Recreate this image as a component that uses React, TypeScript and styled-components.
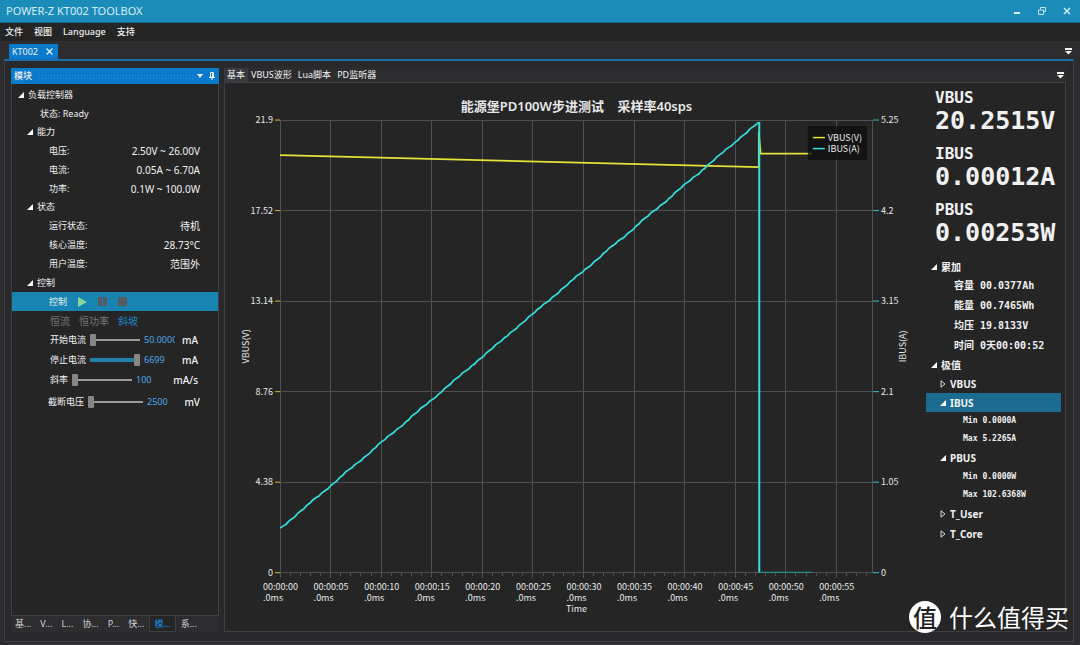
import React from "react";
import styled, { createGlobalStyle } from "styled-components";

const SANS = `"Noto Sans", "Noto Sans CJK SC", sans-serif`;
const MONO = `"DejaVu Sans Mono", "Noto Sans CJK SC", monospace`;

const GlobalStyle = createGlobalStyle`
  * { box-sizing: border-box; }
  body { margin: 0; background: #2d2d30; color: #f1f1f1; font: 10px/16px ${SANS}; }
  button, input { font: inherit; color: inherit; background: none; border: 0; padding: 0; margin: 0; }
`;

const Page = styled.div`
  min-height: 100vh;
  display: flex;
  flex-direction: column;
`;

const TitleBar = styled.header`
  height: 23px;
  padding: 0 8px 0 6px;
  display: flex;
  align-items: center;
  justify-content: space-between;
  background: #1b8cba;
  border-bottom: 1px solid #17698c;
`;

const Title = styled.h1`
  margin: 0;
  font-size: 11px;
  font-weight: 400;
  color: #d8eef7;
`;

const WindowButtons = styled.div`
  display: flex;
  gap: 15px;
`;

const IconButton = styled.button`
  display: flex;
  align-items: center;
  justify-content: center;
  width: 10px;
  height: 10px;
`;

const MenuBar = styled.nav`
  height: 18px;
  padding: 0 5px;
  display: flex;
  align-items: center;
  gap: 11px;
  background: #252526;
  font-size: 9px;
  font-weight: 500;
`;

const DocumentBar = styled.div`
  height: 18px;
  margin: 0 6px 0 4px;
  padding: 3px 1px 0 5px;
  display: flex;
  justify-content: space-between;
  align-items: center;
`;

const DocumentTab = styled.button`
  height: 15px;
  padding: 0 5px 0 3px;
  display: flex;
  align-items: center;
  gap: 8px;
  background: #0a7acc;
  font-size: 9px;
  line-height: 15px;
`;

const Workspace = styled.main`
  flex: 1;
  margin: 0 6px 3px 4px;
  padding: 7px 7px 9px 6px;
  display: flex;
  gap: 5px;
  border: 1px solid #3f3f46;
  border-top: 2px solid #1b6ea8;
  background: #29292b;
`;

const SidePanel = styled.section`
  width: 208px;
  flex: none;
  display: flex;
  flex-direction: column;
`;

const PanelHeader = styled.header`
  height: 16px;
  padding: 0 2px 0 3px;
  display: flex;
  align-items: center;
  gap: 2px;
  background: #0a7acc;
  font-size: 9px;
  font-weight: 500;
`;

const Grip = styled.span`
  flex: 1;
  height: 5px;
  margin-left: 4px;
  background-image: radial-gradient(circle, #2f92da 0 1px, transparent 1px);
  background-size: 3px 3px;
`;

const PanelBody = styled.div`
  flex: 1;
  border: 1px solid #3f3f46;
  border-top: 0;
  padding-top: 1px;
  background: #252526;
  font-size: 9px;
`;

const Row = styled.div<{ $indent: number; $height?: number; $selected?: string }>`
  height: ${(p) => p.$height ?? 19}px;
  padding-left: ${(p) => p.$indent}px;
  padding-right: 18px;
  display: flex;
  align-items: center;
  justify-content: space-between;
  background: ${(p) => p.$selected ?? "transparent"};
`;

const Reading = styled.span`
  font-size: 10px;
`;

const TreeToggle = styled.button`
  display: flex;
  align-items: center;
  gap: 4px;
`;

const Transport = styled.div`
  flex: 1;
  display: flex;
  align-items: center;
  gap: 10px;
`;

const ModeRow = styled.div`
  height: 19px;
  padding-left: 38px;
  display: flex;
  align-items: center;
  gap: 9px;
  font-size: 10px;
`;

const Mode = styled.button<{ $active?: boolean }>`
  color: ${(p) => (p.$active ? "#1f84c4" : "#77777a")};
`;

const SliderRow = styled.div<{ $wide?: boolean }>`
  height: 20px;
  padding: 0 ${(p) => (p.$wide ? 18 : 20)}px 0 ${(p) => (p.$wide ? 36 : 38)}px;
  margin-top: ${(p) => (p.$wide ? 2 : 0)}px;
  display: flex;
  align-items: center;
`;

const SliderLabel = styled.label`
  flex: none;
`;

const Slider = styled.input<{ $track: string; $thick: number; $width: number }>`
  appearance: none;
  flex: none;
  width: ${(p) => p.$width}px;
  height: 14px;
  margin-left: 4px;
  &::-webkit-slider-runnable-track {
    height: ${(p) => p.$thick}px;
    background: ${(p) => p.$track};
  }
  &::-webkit-slider-thumb {
    appearance: none;
    width: 6px;
    height: 12px;
    margin-top: ${(p) => (p.$thick - 12) / 2}px;
    border-radius: 1px;
    background: #868686;
  }
`;

const SliderValue = styled.input`
  width: 31px;
  margin-left: 4px;
  height: 16px;
  color: #4ea8e6;
`;

const Unit = styled.span`
  margin-left: auto;
  font-size: 10px;
  font-weight: 500;
`;

const BottomTabs = styled.div`
  height: 16px;
  display: flex;
  gap: 1px;
  background: #2d2d30;
`;

const BottomTab = styled.button<{ $active?: boolean }>`
  height: 16px;
  padding: 0 4px;
  color: ${(p) => (p.$active ? "#1f93e8" : "#d0d0d0")};
  background: ${(p) => (p.$active ? "#252526" : "transparent")};
  border: ${(p) => (p.$active ? "1px solid #3f3f46" : "0")};
  border-top: 0;
  font-size: 9px;
`;

const DataPanel = styled.section`
  flex: 1;
  min-width: 0;
  display: flex;
  flex-direction: column;
`;

const ViewTabs = styled.div`
  height: 14px;
  padding-right: 1px;
  display: flex;
  align-items: center;
  background: #2d2d30;
`;

const ViewTab = styled.button<{ $active?: boolean }>`
  height: 14px;
  padding: 0 3px;
  font-size: 9px;
  line-height: 14px;
  background: ${(p) => (p.$active ? "#3a3a3e" : "transparent")};
`;

const TabMenu = styled(IconButton)`
  margin-left: auto;
`;

const DataBody = styled.div`
  flex: 1;
  padding-right: 4px;
  display: flex;
  align-items: flex-start;
  border: 1px solid #3f3f46;
  background: #252526;
`;

const Chart = styled.svg`
  flex: 1;
  min-width: 0;
  display: block;
  font-family: "Noto Sans CJK SC", sans-serif;
  font-size: 9px;
  fill: #e8e8e8;
`;

const ChartTitle = styled.text`
  font: 600 13px ${SANS};
  white-space: pre;
`;

const Readout = styled.aside`
  width: 135px;
  flex: none;
  padding-top: 6px;
  font-weight: 700;
`;

const Metric = styled.div`
  padding-left: 9px;
  margin-bottom: 10px;
  font-family: ${MONO};
`;

const MetricName = styled.div`
  font-size: 16px;
  line-height: 18px;
`;

const MetricValue = styled.div`
  font-size: 25px;
  line-height: 28px;
`;

const Total = styled.div`
  height: 20px;
  padding-left: 28px;
  display: flex;
  align-items: center;
  gap: 6px;
  font-family: ${MONO};
`;

const Extreme = styled(Row)`
  justify-content: flex-start;
  gap: 5px;
  font-family: ${MONO};
  font-size: 8px;
`;

const Watermark = styled.div`
  position: absolute;
  right: 11px;
  top: 601px;
  display: flex;
  align-items: center;
  gap: 8px;
  font-family: "Noto Sans CJK SC", sans-serif;
  font-size: 24px;
  line-height: 32px;
  color: #fff;
`;

const Seal = styled.span`
  width: 32px;
  height: 32px;
  border-radius: 50%;
  background: #fff;
  color: #222;
  text-align: center;
  font-weight: 500;
`;

const Arrow = ({ open = true }: { open?: boolean }) => (
  <svg width="6" height="8" viewBox="0 0 6 8" aria-hidden="true">
    {open ? <path d="M6 1V7H0Z" fill="#fff" /> : <path d="M1 0.8V7.2L5 4Z" fill="none" stroke="#ddd" />}
  </svg>
);

const TabListIcon = () => (
  <svg width="7" height="7" viewBox="0 0 7 7" aria-hidden="true">
    <path d="M0 0H7V2H0ZM0 3H7L3.5 6.5Z" fill="#f1f1f1" />
  </svg>
);

type NodeProps = { label: string; indent: number; open?: boolean; height?: number; selected?: string };
const TreeNode = ({ label, indent, open = true, height, selected }: NodeProps) => (
  <Row $indent={indent} $height={height} $selected={selected}>
    <TreeToggle aria-expanded={open}>
      <Arrow open={open} />
      {label}
    </TreeToggle>
  </Row>
);

const capability = [
  ["电压:", "2.50V ~ 26.00V"],
  ["电流:", "0.05A ~ 6.70A"],
  ["功率:", "0.1W ~ 100.0W"],
];
const status = [
  ["运行状态:", "待机"],
  ["核心温度:", "28.73°C"],
  ["用户温度:", "范围外"],
];
const sliders = [
  { id: "start", label: "开始电流", pos: 0, value: "50.0000", unit: "mA", width: 50 },
  { id: "stop", label: "停止电流", pos: 100, value: "6699", unit: "mA", width: 50 },
  { id: "slope", label: "斜率", pos: 0, value: "100", unit: "mA/s", width: 60 },
  { id: "cutoff", label: "截断电压", pos: 0, value: "2500", unit: "mV", width: 55, wide: true },
];
const metrics = [
  ["VBUS", "20.2515V"],
  ["IBUS", "0.00012A"],
  ["PBUS", "0.00253W"],
];
const totals = [
  ["容量", "00.0377Ah"],
  ["能量", "00.7465Wh"],
  ["均压", "19.8133V"],
  ["时间", "0天00:00:52"],
];

const PLOT = { left: 56, right: 648, top: 37, bottom: 489 };
const xAt = (s: number) => PLOT.left + s * 10.1;
const yAt = (i: number) => PLOT.top + (i * (PLOT.bottom - PLOT.top)) / 5;
const leftTicks = ["21.9", "17.52", "13.14", "8.76", "4.38", "0"];
const rightTicks = ["5.25", "4.2", "3.15", "2.1", "1.05", "0"];

const RAMP_STEPS = 160;
const rampPoints = Array.from({ length: RAMP_STEPS + 1 }, (_, i) => {
  const x = 56 + (478 * i) / RAMP_STEPS;
  const wobble = i === RAMP_STEPS ? 0 : (((i * 37) % 11) / 11 - 0.5) * 1.4 + Math.sin(i * 0.5) * 0.4;
  return `${x.toFixed(1)},${(445 - (406 * i) / RAMP_STEPS + wobble).toFixed(1)}`;
}).join(" ");

const PowerChart = () => (
  <Chart viewBox="1 0 700 547" role="img" aria-label="VBUS / IBUS">
    <g stroke="#505052" shapeRendering="crispEdges">
      {Array.from({ length: 12 }, (_, i) => (
        <line key={i} x1={xAt(i * 5)} x2={xAt(i * 5)} y1={PLOT.top} y2={PLOT.bottom + 5} />
      ))}
      {Array.from({ length: 59 }, (_, i) => (
        <line key={i} x1={xAt(i)} x2={xAt(i)} y1={PLOT.bottom} y2={PLOT.bottom + 3} />
      ))}
      <line x1={PLOT.right} x2={PLOT.right} y1={PLOT.top} y2={PLOT.bottom} />
      {leftTicks.map((t, i) => (
        <line key={t} x1={PLOT.left} x2={PLOT.right} y1={yAt(i)} y2={yAt(i)} />
      ))}
    </g>
    {leftTicks.map((t, i) => (
      <g key={t}>
        <line x1="51" x2="56" y1={yAt(i)} y2={yAt(i)} stroke="#c8c030" />
        <line x1="648" x2="654" y1={yAt(i)} y2={yAt(i)} stroke="#2ec8c8" />
        <text x="49" y={yAt(i) + 3} textAnchor="end">{t}</text>
        <text x="656" y={yAt(i) + 3}>{rightTicks[i]}</text>
      </g>
    ))}
    {Array.from({ length: 12 }, (_, i) => (
      <text key={i} y="506">
        <tspan x={xAt(i * 5) - 17}>{`00:00:${String(i * 5).padStart(2, "0")}`}</tspan>
        <tspan x={xAt(i * 5) - 17} dy="11">.0ms</tspan>
      </text>
    ))}
    <text x="352" y="528" textAnchor="middle">Time</text>
    <text transform="translate(25 263) rotate(-90)" textAnchor="middle">VBUS(V)</text>
    <text transform="translate(681 263) rotate(-90)" textAnchor="middle">IBUS(A)</text>
    <ChartTitle x="352" y="28" textAnchor="middle">{"能源堡PD100W步进测试    采样率40sps"}</ChartTitle>
    <polyline points="56,72 255,77 534,84 534,49 536,70.5 587,70.5" fill="none" stroke="#e8e337" strokeWidth="1.6" />
    <polyline points={rampPoints} fill="none" stroke="#35dfdf" strokeWidth="1.7" />
    <polyline points="534.5,39 534.5,489" fill="none" stroke="#35dfdf" strokeWidth="2" />
    <line x1="534" x2="587" y1="488.5" y2="488.5" stroke="#1f9c9c" />
    <rect x="583" y="43" width="59" height="34" fill="#0e0e0e" fillOpacity="0.78" />
    <line x1="588" x2="600" y1="54.5" y2="54.5" stroke="#e8e337" strokeWidth="1.5" />
    <line x1="588" x2="600" y1="65.5" y2="65.5" stroke="#35dfdf" strokeWidth="1.5" />
    <text x="603" y="58">VBUS(V)</text>
    <text x="603" y="69">IBUS(A)</text>
  </Chart>
);

export default function App() {
  return (
    <Page>
      <GlobalStyle />
      <TitleBar>
        <Title>POWER-Z KT002 TOOLBOX</Title>
        <WindowButtons>
          <IconButton aria-label="最小化">
            <svg width="8" height="8"><path d="M1 6H7" stroke="#d7f0fa" strokeWidth="2" /></svg>
          </IconButton>
          <IconButton aria-label="还原">
            <svg width="8" height="8" fill="none" stroke="#c5e6f3"><path d="M2.5 2.5V.5H7.5V4.5H5.5M.5 3H5.5V7.5H.5Z" /></svg>
          </IconButton>
          <IconButton aria-label="关闭">
            <svg width="8" height="8"><path d="M1 1L7 7M7 1L1 7" stroke="#d7f0fa" strokeWidth="1.4" /></svg>
          </IconButton>
        </WindowButtons>
      </TitleBar>
      <MenuBar>
        {["文件", "视图", "Language", "支持"].map((m) => (
          <button key={m}>{m}</button>
        ))}
      </MenuBar>
      <DocumentBar>
        <DocumentTab>
          KT002
          <svg width="7" height="7" aria-hidden="true"><path d="M.5 .5L6.5 6.5M6.5 .5L.5 6.5" stroke="#e8f4ff" strokeWidth="1.2" /></svg>
        </DocumentTab>
        <IconButton aria-label="文档列表"><TabListIcon /></IconButton>
      </DocumentBar>
      <Workspace>
        <SidePanel>
          <PanelHeader>
            模块
            <Grip />
            <IconButton aria-label="菜单"><svg width="6" height="4"><path d="M0 0H6L3 4Z" fill="#fff" /></svg></IconButton>
            <IconButton aria-label="固定">
              <svg width="6" height="8" fill="none" stroke="#fff"><path d="M1.5 5V.5H4.5V5M3.5 .5V5M0 5.5H6M3 5.5V8" /></svg>
            </IconButton>
          </PanelHeader>
          <PanelBody>
            <TreeNode label="负载控制器" indent={6} />
            <Row $indent={28}>状态: Ready</Row>
            <TreeNode label="能力" indent={15} height={18} />
            {capability.map(([k, v]) => (
              <Row key={k} $indent={37}><span>{k}</span><Reading>{v}</Reading></Row>
            ))}
            <TreeNode label="状态" indent={15} height={18} />
            {status.map(([k, v]) => (
              <Row key={k} $indent={37}><span>{k}</span><Reading>{v}</Reading></Row>
            ))}
            <TreeNode label="控制" indent={15} />
            <Row $indent={37} $selected="#1784b2">
              <Transport>
                控制
                <IconButton aria-label="开始"><svg width="9" height="10"><path d="M0 0V10L9 5Z" fill="#86d69a" /></svg></IconButton>
                <IconButton aria-label="暂停"><svg width="9" height="9"><path d="M0 0H4V9H0ZM5 0H9V9H5Z" fill="#555c61" /></svg></IconButton>
                <IconButton aria-label="停止"><svg width="9" height="9"><path d="M0 0H9V9H0Z" fill="#555c61" /></svg></IconButton>
              </Transport>
            </Row>
            <ModeRow>
              <Mode>恒流</Mode>
              <Mode>恒功率</Mode>
              <Mode $active>斜坡</Mode>
            </ModeRow>
            {sliders.map((s) => (
              <SliderRow key={s.id} $wide={s.wide}>
                <SliderLabel htmlFor={s.id}>{s.label}</SliderLabel>
                <Slider
                  id={s.id}
                  type="range"
                  defaultValue={s.pos}
                  $width={s.width}
                  $track={s.pos ? "#2280aa" : "#9a9a9a"}
                  $thick={s.pos ? 4 : 2}
                />
                <SliderValue aria-label={s.label} defaultValue={s.value} />
                <Unit>{s.unit}</Unit>
              </SliderRow>
            ))}
          </PanelBody>
          <BottomTabs>
            {["基...", "V...", "L...", "协...", "P...", "快...", "模...", "系..."].map((t) => (
              <BottomTab key={t} $active={t === "模..."}>{t}</BottomTab>
            ))}
          </BottomTabs>
        </SidePanel>
        <DataPanel>
          <ViewTabs>
            {["基本", "VBUS波形", "Lua脚本", "PD监听器"].map((t, i) => (
              <ViewTab key={t} $active={i === 0}>{t}</ViewTab>
            ))}
            <TabMenu aria-label="视图列表"><TabListIcon /></TabMenu>
          </ViewTabs>
          <DataBody>
            <PowerChart />
            <Readout>
              {metrics.map(([k, v]) => (
                <Metric key={k}>
                  <MetricName>{k}</MetricName>
                  <MetricValue>{v}</MetricValue>
                </Metric>
              ))}
              <TreeNode label="累加" indent={5} />
              {totals.map(([k, v]) => (
                <Total key={k}><span>{k}</span><span>{v}</span></Total>
              ))}
              <TreeNode label="极值" indent={5} height={18} />
              <TreeNode label="VBUS" indent={14} open={false} />
              <TreeNode label="IBUS" indent={14} selected="#1b6c90" />
              <Extreme $indent={37} $height={18}><span>Min</span><span>0.0000A</span></Extreme>
              <Extreme $indent={37} $height={18}><span>Max</span><span>5.2265A</span></Extreme>
              <TreeNode label="PBUS" indent={14} height={20} />
              <Extreme $indent={37} $height={18}><span>Min</span><span>0.0000W</span></Extreme>
              <Extreme $indent={37} $height={18}><span>Max</span><span>102.6368W</span></Extreme>
              <TreeNode label="T_User" indent={14} height={20} open={false} />
              <TreeNode label="T_Core" indent={14} height={20} open={false} />
            </Readout>
          </DataBody>
        </DataPanel>
      </Workspace>
      <Watermark>
        <Seal>值</Seal>
        什么值得买
      </Watermark>
    </Page>
  );
}
